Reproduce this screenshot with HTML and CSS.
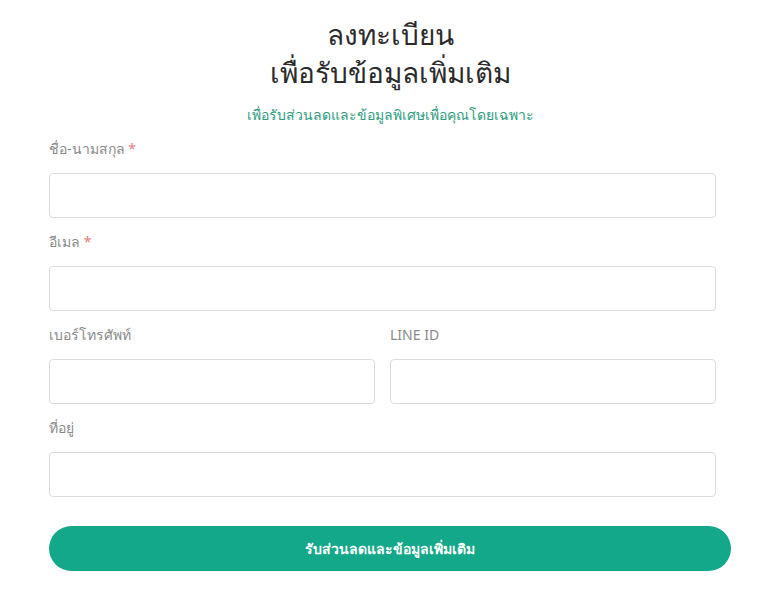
FILE: index.html
```html
<!DOCTYPE html>
<html lang="th">
<head>
<meta charset="utf-8">
<title>ลงทะเบียน</title>
<link rel="stylesheet" href="styles.css">
</head>
<body>
<main class="register">
  <h1 class="title">ลงทะเบียน<br>เพื่อรับข้อมูลเพิ่มเติม</h1>
  <p class="subtitle">เพื่อรับส่วนลดและข้อมูลพิเศษเพื่อคุณโดยเฉพาะ</p>
  <form class="form">
    <div class="fields">
      <div class="field">
        <label class="label">ชื่อ-นามสกุล <span class="req">*</span></label>
        <input class="input" type="text">
      </div>
      <div class="field">
        <label class="label">อีเมล <span class="req">*</span></label>
        <input class="input" type="email">
      </div>
      <div class="row">
        <div class="field">
          <label class="label">เบอร์โทรศัพท์</label>
          <input class="input" type="tel">
        </div>
        <div class="field">
          <label class="label">LINE ID</label>
          <input class="input" type="text">
        </div>
      </div>
      <div class="field">
        <label class="label">ที่อยู่</label>
        <input class="input" type="text">
      </div>
    </div>
    <button class="submit" type="button">รับส่วนลดและข้อมูลเพิ่มเติม</button>
  </form>
</main>
</body>
</html>
```

FILE: styles.css
```css
* { box-sizing: border-box; }
html, body { margin: 0; padding: 0; background: #fff; }
body {
  font-family: "Noto Sans", "DejaVu Sans", sans-serif;
  color: #333;
}
.register {
  width: 682px;
  margin-left: 49px;
  padding-top: 15px;
}
.title {
  margin: 0;
  text-align: center;
  font-size: 28px;
  line-height: 38px;
  font-weight: 500;
  color: #2b2b2b;
}
.subtitle {
  margin: 13px 0 0;
  text-align: center;
  font-size: 14px;
  line-height: 22px;
  color: #2e9c80;
}
.form { margin-top: 11px; }
.fields {
  padding-right: 15px;
  display: flex;
  flex-direction: column;
  gap: 12px;
}
.row {
  display: grid;
  grid-template-columns: 1fr 1fr;
  gap: 15px;
}
.field { display: flex; flex-direction: column; }
.label {
  font-size: 14px;
  line-height: 24px;
  color: #8a8a8a;
  margin-bottom: 12px;
}
.req { color: #e57b7b; font-weight: 400; }
.input {
  display: block;
  width: 100%;
  height: 45px;
  border: 1px solid #dcdcdc;
  border-radius: 4px;
  background: #fff;
  font: inherit;
}
.submit {
  display: block;
  width: 100%;
  height: 45px;
  margin-top: 29px;
  border: 0;
  border-radius: 23px;
  background: #13a889;
  color: #fff;
  font-family: inherit;
  font-size: 14px;
  font-weight: 700;
}
```
